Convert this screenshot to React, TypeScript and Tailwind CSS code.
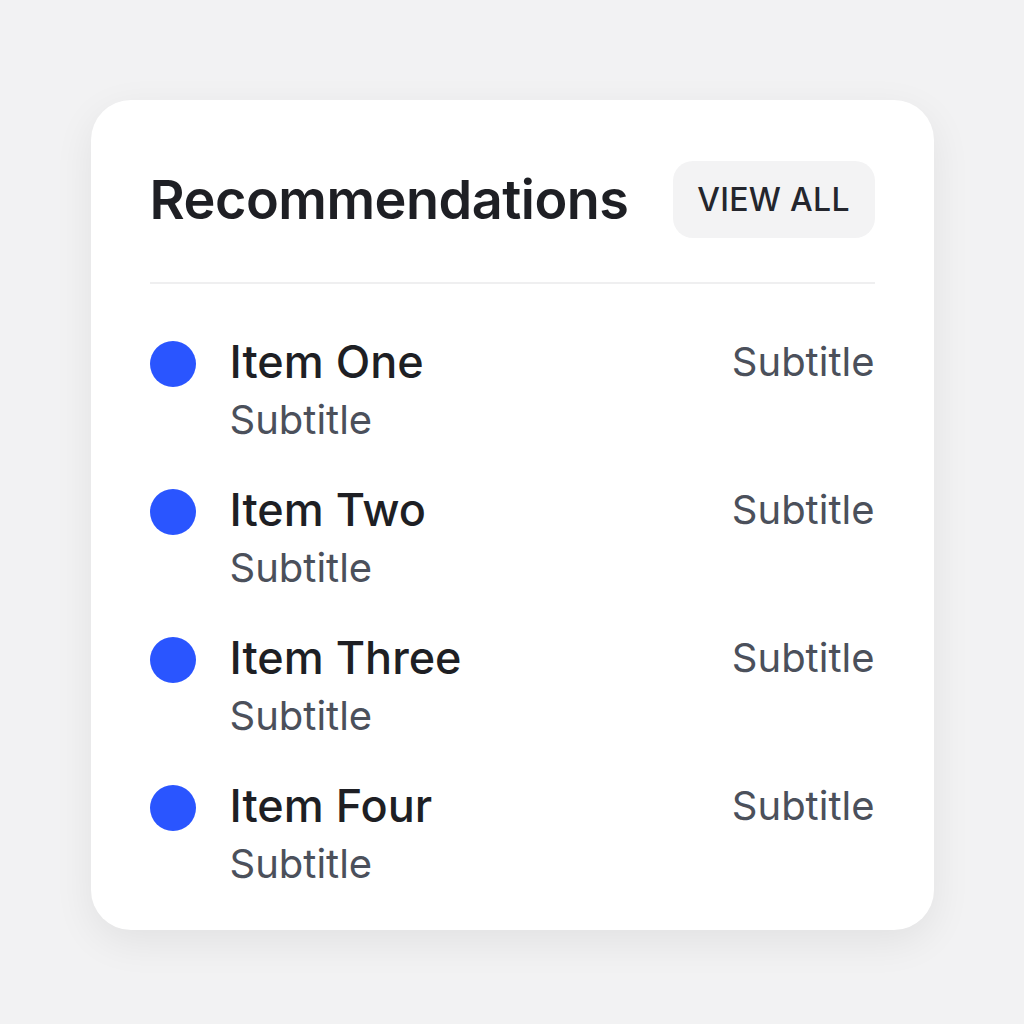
const items = ['Item One', 'Item Two', 'Item Three', 'Item Four']

export default function App() {
  return (
    <div
      className="min-h-screen w-full bg-[#f2f2f3] flex justify-center pt-[100px]"
      style={{ fontFamily: 'Inter, "Liberation Sans", sans-serif' }}
    >
      <div className="w-[843px] h-[830px] bg-white rounded-[40px] shadow-[0_12px_40px_rgba(0,0,0,0.07)] px-[59px] pt-[61px]">
        {/* Header */}
        <div className="flex items-center justify-between">
          <h2 className="text-[54px] leading-[60px] font-semibold text-[#1e1f24] tracking-[-0.5px]">
            Recommendations
          </h2>
          <button className="h-[77px] w-[202px] rounded-[20px] bg-[#f3f3f4] text-[32px] font-medium text-[#24262d] tracking-[0.3px]">
            VIEW ALL
          </button>
        </div>

        <div className="mt-[44px] h-[2px] bg-[#efeff0]" />

        {/* List */}
        <div className="mt-[50px] flex flex-col gap-[36px]">
          {items.map((name) => (
            <div key={name} className="flex items-start">
              <div className="mt-[7px] w-[46px] h-[46px] rounded-full bg-[#2a55ff] shrink-0" />
              <div className="ml-[34px] flex flex-col">
                <div className="text-[45px] leading-[56px] font-medium text-[#1e1f24]">{name}</div>
                <div className="mt-1 text-[40px] leading-[52px] text-[#4b505b]">Subtitle</div>
              </div>
              <div className="ml-auto text-[40px] leading-[56px] text-[#4b505b]">Subtitle</div>
            </div>
          ))}
        </div>
      </div>
    </div>
  )
}
